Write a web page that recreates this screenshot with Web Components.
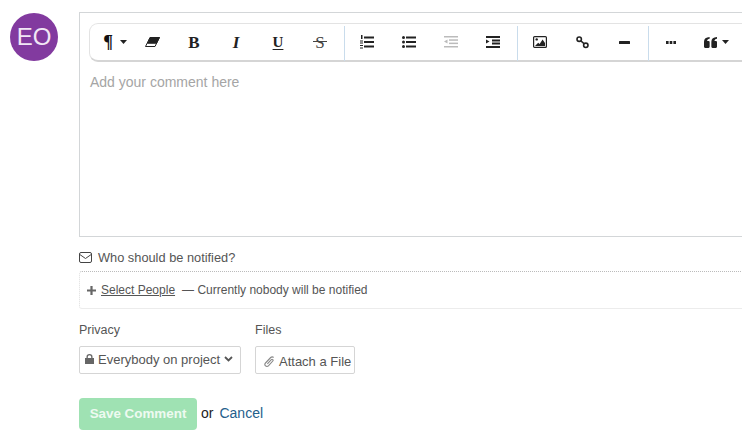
<!DOCTYPE html>
<html>
<head>
<meta charset="utf-8">
<style>
  html, body { margin: 0; width: 742px; height: 440px; overflow: hidden; background: #fff; }
  body { font-family: "Liberation Sans", Arial, sans-serif; color: #555; }
</style>
</head>
<body>
<comment-form>
  <user-avatar slot="avatar">EO</user-avatar>
  <rich-editor placeholder="Add your comment here"></rich-editor>
  <notify-box></notify-box>
  <form-options></form-options>
  <save-actions></save-actions>
</comment-form>

<script>
class CommentForm extends HTMLElement {
  constructor() {
    super();
    this.attachShadow({ mode: 'open' });
    this.shadowRoot.innerHTML = `
      <style>
        :host { display: flex; width: 742px; height: 440px; overflow: hidden; box-sizing: border-box; padding: 12px 0 0 10px; }
        .side { flex: 0 0 69px; }
        .main { flex: 0 0 700px; display: flex; flex-direction: column; }
      </style>
      <div class="side"><slot name="avatar"></slot></div>
      <div class="main"><slot></slot></div>
    `;
  }
}

class UserAvatar extends HTMLElement {
  constructor() {
    super();
    this.attachShadow({ mode: 'open' });
    this.shadowRoot.innerHTML = `
      <style>
        :host {
          display: flex; align-items: center; justify-content: center;
          width: 48px; height: 48px; margin-top: 1px; border-radius: 50%;
          background: #823a9f; color: #f1e6f5;
          font: 24px "Liberation Sans", Arial, sans-serif;
        }
      </style>
      <slot></slot>
    `;
  }
}

class ToolButton extends HTMLElement {
  constructor() {
    super();
    this.attachShadow({ mode: 'open' });
    this.shadowRoot.innerHTML = `
      <style>
        :host {
          display: flex; align-items: center; justify-content: center;
          flex: 0 0 42px; height: 38px; color: #222;
        }
        :host([muted]) { color: #bbb; }
        ::slotted(svg) { display: block; }
      </style>
      <slot></slot>
    `;
  }
}

class RichEditor extends HTMLElement {
  constructor() {
    super();
    this.attachShadow({ mode: 'open' });
    const caret = '<svg width="7" height="4" viewBox="0 0 7 4"><path d="M0 0h7L3.5 4z" fill="#222"/></svg>';
    const line = (y, x1 = 0, x2 = 14, h = 2) => `<rect x="${x1}" y="${y}" width="${x2 - x1}" height="${h}"/>`;
    this.shadowRoot.innerHTML = `
      <style>
        :host { display: block; box-sizing: border-box; height: 225px; border: 1px solid #d3d6d8; padding: 10px 0 0 9px; }
        .bar {
          display: flex; width: 720px; height: 39px; box-sizing: border-box;
          border: 1px solid #e3e3e3; border-bottom: 2px solid #d5d5d5; border-radius: 9px; background: #fff;
        }
        .group { display: flex; flex: none; padding-right: 4px; margin-right: 1px; position: relative; height: 36px; }
        .group::after { content: ""; position: absolute; right: 0; top: 2px; bottom: -1px; width: 1px; background: #c9dcec; }
        .group.last::after { display: none; }
        .group > tool-button { height: 36px; }
        .para { flex-basis: 41px; gap: 7px; padding-left: 9px; box-sizing: border-box; font: bold 18px/1 "Liberation Serif", serif; color: #111; }
        .quote { gap: 5px; flex-basis: 48px; }
        .txt { font: 17px/1 "Liberation Serif", serif; color: #222; position: relative; }
        .b { font-weight: bold; }
        .i { font-style: italic; font-weight: bold; }
        .u { text-decoration: underline; font-weight: bold; font-size: 15px; text-underline-offset: 2px; }
        .s { color: #444; }
        .s::after { content: ""; position: absolute; left: -2px; right: -2px; top: 7px; height: 1px; background: #444; }
        .hint { margin: 12px 0 0 1px; color: #a5a5a5; font: 14px "Liberation Sans", Arial, sans-serif; }
      </style>
      <div class="bar">
        <div class="group">
          <tool-button class="para"><span>¶</span>${caret}</tool-button>
          <tool-button><svg width="15" height="10" viewBox="0 0 15 10"><path d="M5 .5h9.5L10 9.5H.5z" fill="#fff" stroke="#222"/><path d="M5 .5h9.5L11.5 6.5H2.5z" fill="#222" stroke="#222" stroke-width=".6"/></svg></tool-button>
          <tool-button><span class="txt b">B</span></tool-button>
          <tool-button><span class="txt i">I</span></tool-button>
          <tool-button><span class="txt u">U</span></tool-button>
          <tool-button><span class="txt s">S</span></tool-button>
        </div>
        <div class="group">
          <tool-button><svg width="14" height="14" viewBox="0 0 14 14" fill="currentColor">${line(1.5,4)}${line(6,4)}${line(10.5,4)}<rect x="1" y="0" width="1.5" height="4"/><rect x="0" y="5.5" width="3" height="1"/><rect x="0" y="7.5" width="3" height="1"/><rect x="0" y="10" width="3" height="1"/><rect x="0" y="12.5" width="3" height="1"/></svg></tool-button>
          <tool-button><svg width="14" height="12" viewBox="0 0 14 12" fill="currentColor"><circle cx="1.5" cy="1.5" r="1.5"/><circle cx="1.5" cy="6" r="1.5"/><circle cx="1.5" cy="10.5" r="1.5"/>${line(.5,4)}${line(5,4)}${line(9.5,4)}</svg></tool-button>
          <tool-button muted><svg width="14" height="12" viewBox="0 0 14 12" fill="currentColor">${line(0,0,14,1.5)}${line(3.3,5,14,1.5)}${line(6.6,5,14,1.5)}${line(10,0,14,1.5)}<path d="M3.5 3.5v4L0 5.5z"/></svg></tool-button>
          <tool-button><svg width="14" height="12" viewBox="0 0 14 12" fill="currentColor">${line(0)}${line(3.5,6)}${line(6.5,6)}${line(10)}<path d="M0 3.5v4l3.5-2z"/></svg></tool-button>
        </div>
        <div class="group">
          <tool-button><svg width="14" height="12" viewBox="0 0 14 12"><rect x=".6" y=".6" width="12.8" height="10.8" rx="1" fill="#fff" stroke="#222" stroke-width="1.2"/><circle cx="3.7" cy="3.4" r="1.2" fill="#222"/><path d="M2 10l3.2-3.2 1.4 1.2L9.6 3.6 12 7v3z" fill="#222"/></svg></tool-button>
          <tool-button><svg width="13" height="13" viewBox="0 0 13 13" fill="none" stroke="#222" stroke-width="1.6"><circle cx="3.2" cy="3.2" r="2.2"/><circle cx="9.8" cy="9.3" r="2.2"/><path d="M5 5l3 2.6"/></svg></tool-button>
          <tool-button><svg width="11" height="3" viewBox="0 0 11 3" fill="currentColor"><rect width="11" height="3" rx=".5"/></svg></tool-button>
        </div>
        <div class="group last">
          <tool-button><svg width="10" height="3" viewBox="0 0 10 3" fill="currentColor"><rect width="2.6" height="3"/><rect x="3.7" width="2.6" height="3"/><rect x="7.4" width="2.6" height="3"/></svg></tool-button>
          <tool-button class="quote"><svg width="13" height="11" viewBox="0 0 12 10" fill="currentColor"><path d="M5.2 0v1.5C3.6 1.8 2.9 2.6 2.9 3.6h1.3a1 1 0 0 1 1 1V9a1 1 0 0 1-1 1H1a1 1 0 0 1-1-1V4.2C0 1.7 1.8.2 5.2 0zM12 0v1.5c-1.6.3-2.3 1.1-2.3 2.1H11a1 1 0 0 1 1 1V9a1 1 0 0 1-1 1H7.8a1 1 0 0 1-1-1V4.2C6.8 1.7 8.6.2 12 0z"/></svg>${caret}</tool-button>
        </div>
      </div>
      <div class="hint">${this.getAttribute('placeholder')}</div>
    `;
  }
}

class NotifyBox extends HTMLElement {
  constructor() {
    super();
    this.attachShadow({ mode: 'open' });
    this.shadowRoot.innerHTML = `
      <style>
        :host { display: block; margin-top: 12px; color: #555; }
        .head { display: flex; align-items: center; gap: 6px; height: 16px; font-size: 12.8px; }
        .head svg { flex: none; }
        .box {
          display: flex; align-items: center; height: 38px; box-sizing: border-box; margin-top: 6px; padding-left: 7px;
          border: 1px solid #ececec; border-top: 1px dotted #bbb; border-left: 1px dotted #ddd; border-radius: 3px; font-size: 12px;
        }
        .box svg { margin-right: 5px; }
        u { margin-right: 7px; }
      </style>
      <div class="head">
        <svg width="13" height="11" viewBox="0 0 13 11" fill="none" stroke="#444"><rect x=".5" y=".5" width="12" height="10" rx="1.5"/><path d="M.8 2.5l5.7 4 5.7-4"/></svg>
        <span>Who should be notified?</span>
      </div>
      <div class="box">
        <svg width="9" height="9" viewBox="0 0 9 9" fill="#666"><path d="M3.4 0h2.2v3.4H9v2.2H5.6V9H3.4V5.6H0V3.4h3.4z"/></svg>
        <u>Select People</u><span>— Currently nobody will be notified</span>
      </div>
    `;
  }
}

class FormOptions extends HTMLElement {
  constructor() {
    super();
    this.attachShadow({ mode: 'open' });
    this.shadowRoot.innerHTML = `
      <style>
        :host { display: flex; gap: 14px; margin-top: 13px; font-size: 13px; color: #555; }
        label { display: block; height: 16px; line-height: 16px; margin-bottom: 8px; font-size: 12.5px; }
        .ctl {
          display: flex; align-items: center; height: 28px; box-sizing: border-box;
          border: 1px solid #d5d5d5; border-radius: 2px; background: #fff; white-space: nowrap;
        }
        .sel { width: 162px; padding: 0 0 2px 5px; gap: 4px; }
        .file { width: 100px; padding: 3px 0 0 8px; gap: 4px; }
      </style>
      <div>
        <label>Privacy</label>
        <div class="ctl sel">
          <svg width="9" height="10" viewBox="0 0 9 10" fill="#666"><path d="M1.5 4V2.8a3 2.8 0 0 1 6 0V4H9v6H0V4zm1.3 0h3.4V2.8a1.7 1.6 0 0 0-3.4 0z"/></svg>
          <span>Everybody on project</span>
          <svg width="9" height="6" viewBox="0 0 9 6" fill="none" stroke="#555" stroke-width="1.8"><path d="M1 1l3.5 3.5L8 1"/></svg>
        </div>
      </div>
      <div>
        <label>Files</label>
        <div class="ctl file">
          <svg width="11" height="12" viewBox="0 0 11 12" fill="none" stroke="#888" stroke-width="1.1"><path d="M9.6 1.5a2 2 0 0 0-2.9 0L1.5 7a2 2 0 0 0 2.9 2.8L8.8 5a1 1 0 0 0-1.5-1.4L3.4 7.8"/></svg>
          <span>Attach a File</span>
        </div>
      </div>
    `;
  }
}

class SaveActions extends HTMLElement {
  constructor() {
    super();
    this.attachShadow({ mode: 'open' });
    this.shadowRoot.innerHTML = `
      <style>
        :host { display: flex; align-items: center; margin-top: 24px; font-size: 14px; color: #222; }
        button {
          width: 118px; height: 32px; padding: 0 0 1px; border: 0; border-radius: 4px;
          background: #9fe2b3; color: #eefaf1; font: bold 13.4px "Liberation Sans", Arial, sans-serif;
        }
        span { padding-bottom: 2px; }
        .or { margin: 0 6px 0 4px; }
        .cancel { color: #24608c; }
      </style>
      <button>Save Comment</button>
      <span class="or">or</span>
      <span class="cancel">Cancel</span>
    `;
  }
}

customElements.define('comment-form', CommentForm);
customElements.define('user-avatar', UserAvatar);
customElements.define('tool-button', ToolButton);
customElements.define('rich-editor', RichEditor);
customElements.define('notify-box', NotifyBox);
customElements.define('form-options', FormOptions);
customElements.define('save-actions', SaveActions);
</script>
</body>
</html>
